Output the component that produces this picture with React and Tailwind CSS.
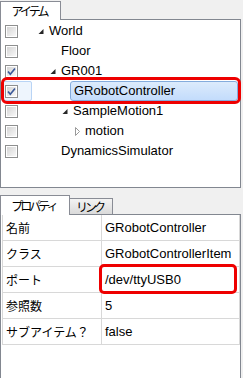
import React from 'react';

const treeItems = [
  { name: 'World', level: 0, arrow: 'open', checked: false },
  { name: 'Floor', level: 1, arrow: null, checked: false },
  { name: 'GR001', level: 1, arrow: 'open', checked: true },
  { name: 'GRobotController', level: 2, arrow: null, checked: true, selected: true },
  { name: 'SampleMotion1', level: 2, arrow: 'open', checked: false },
  { name: 'motion', level: 3, arrow: 'closed', checked: false },
  { name: 'DynamicsSimulator', level: 1, arrow: null, checked: false },
];

const props = [
  ['名前', 'GRobotController'],
  ['クラス', 'GRobotControllerItem'],
  ['ポート', '/dev/ttyUSB0'],
  ['参照数', '5'],
  ['サブアイテム？', 'false'],
];

const indentClass = ['pl-[6px]', 'pl-[18px]', 'pl-[30px]', 'pl-[42px]'];

const CheckBox = ({ checked }) => (
  <div className="w-[13px] h-[13px] border border-[#8e8f8f] bg-white p-px">
    <div className="w-full h-full bg-gradient-to-br from-[#d4d4d4] to-[#f8f8f8] relative">
      {checked && (
        <svg className="absolute -left-px -top-px" width="11" height="11" viewBox="0 0 11 11">
          <path d="M2 5.5 L4.3 8.2 L9 2.5" fill="none" stroke="#3c5a9a" strokeWidth="1.7" />
        </svg>
      )}
    </div>
  </div>
);

const Arrow = ({ type }) => {
  if (type === 'open') {
    return (
      <svg width="11" height="20" viewBox="0 0 11 20">
        <polygon points="5.5,8 5.5,13 0.5,13" fill="#262626" />
      </svg>
    );
  }
  if (type === 'closed') {
    return (
      <svg width="11" height="20" viewBox="0 0 11 20">
        <polygon points="1.5,6.5 5.5,10.5 1.5,14.5" fill="none" stroke="#9a9a9a" />
      </svg>
    );
  }
  return <div className="w-[11px]" />;
};

const TreeRow = ({ item }) => (
  <div className="flex h-[20px] items-center">
    <div
      className={`w-[31px] h-[20px] flex items-center pl-[3px] rounded-[2px] ${
        item.selected ? 'border border-[#b9d4f5] bg-[#eef5fd]' : 'border border-transparent'
      }`}
    >
      <CheckBox checked={item.checked} />
    </div>
    <div className={`flex-1 flex items-center h-[20px] ${indentClass[item.level]}`}>
      {item.selected ? (
        <>
          <div className="w-[11px]" />
          <div className="w-[168px] h-[20px] -ml-[3px] flex items-center pl-[3px] border border-[#84acdd] rounded-[3px] bg-gradient-to-b from-[#dcebfc] to-[#c3dcfc]">
            {item.name}
          </div>
        </>
      ) : (
        <>
          <Arrow type={item.arrow} />
          <span>{item.name}</span>
        </>
      )}
    </div>
  </div>
);

export default function App() {
  return (
    <div className="w-[243px] h-[378px] overflow-hidden bg-[#f0f0f0] text-[13px] text-black font-['Liberation_Sans','Noto_Sans_CJK_JP',sans-serif]">
      {/* Item tab */}
      <div className="flex h-[20px] pt-px">
        <div className="relative z-10 w-[61px] h-[19px] border border-b-0 border-[#898c95] bg-white flex items-center justify-center font-['Noto_Sans_CJK_JP',sans-serif] text-[12px] tracking-[-3px] pr-[3px]">
          アイテム
        </div>
      </div>

      {/* Item tree panel */}
      <div className="relative w-[241px] h-[169px] -mt-px border border-[#828790] bg-white pt-px">
        {treeItems.map((item) => (
          <TreeRow key={item.name} item={item} />
        ))}
        <div className="absolute left-0 top-[57px] w-[240px] h-[27px] border-[3px] border-[#ee0000] rounded-[6px]" />
      </div>

      {/* Property tabs */}
      <div className="flex items-end h-[26px] pt-[6px]">
        <div className="relative z-10 w-[70px] h-[20px] -mb-px border border-b-0 border-[#898c95] bg-white flex items-center justify-center font-['Noto_Sans_CJK_JP',sans-serif] text-[12px] tracking-[-3px] pr-[3px]">
          プロパティ
        </div>
        <div className="w-[44px] h-[16px] -ml-px border border-b-0 border-[#898c95] bg-gradient-to-b from-[#f3f3f3] to-[#dadada] flex items-center justify-center font-['Noto_Sans_CJK_JP',sans-serif] text-[12px] tracking-[-3px] pr-[3px]">
          リンク
        </div>
      </div>

      {/* Property panel */}
      <div className="relative w-[241px] h-[170px] border border-[#828790] bg-white pl-px pr-px">
        <div className="w-[238px] border-l border-r border-[#d8d8d8]">
          {props.map(([k, v]) => (
            <div key={k} className="flex h-[26px] border-b border-[#d8d8d8]">
              <div className="w-[99px] border-r border-[#d8d8d8] flex items-center pl-[3px] font-['Noto_Sans_CJK_JP',sans-serif] text-[12px]">
                {k}
              </div>
              <div className="flex-1 flex items-center pl-[3px]">{v}</div>
            </div>
          ))}
        </div>
        <div className="absolute left-[98px] top-[49px] w-[138px] h-[30px] border-[3px] border-[#ee0000] rounded-[5px]" />
      </div>
    </div>
  );
}
